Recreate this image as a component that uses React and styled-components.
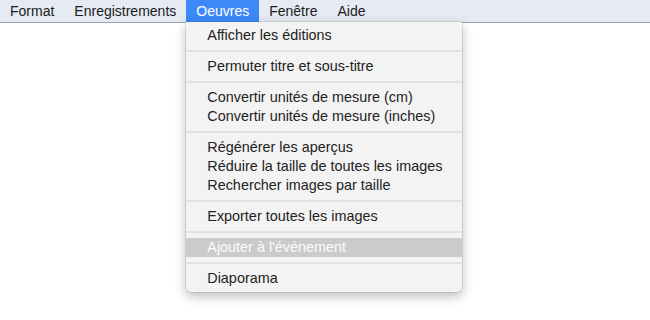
import React from "react";
import styled, { createGlobalStyle } from "styled-components";

const GlobalStyle = createGlobalStyle`
  html, body, #root {
    margin: 0;
    padding: 0;
    height: 100%;
    background: #ffffff;
    font-family: "Liberation Sans", Arial, sans-serif;
  }
`;

const Page = styled.div`
  position: relative;
  min-height: 100vh;
  background: #ffffff;
`;

const MenuBar = styled.nav`
  display: flex;
  height: 22px;
  padding-left: 1px;
  background: #e5eaf3;
  border-bottom: 1px solid #97a3b6;
`;

const MenuTitle = styled.div`
  position: relative;
  padding: 0 10px;
  line-height: 22px;
  font-size: 14px;
  color: ${(p) => (p.$active ? "#ffffff" : "#1c1c1c")};
  background: ${(p) => (p.$active ? "#3d89f7" : "transparent")};
  white-space: nowrap;
  &:first-child {
    padding-left: 9px;
  }
`;

const Dropdown = styled.div`
  position: absolute;
  top: 22px;
  left: 0;
  width: 276px;
  padding: 4px 0;
  background: #f3f3f3;
  border-radius: 0 0 5px 5px;
  box-shadow: 0 0 0 1px rgba(0, 0, 0, 0.07), 0 4px 12px rgba(0, 0, 0, 0.28);
  z-index: 10;
`;

const Item = styled.div`
  height: 19px;
  line-height: 19px;
  padding-left: 21px;
  font-size: 14.4px;
  color: ${(p) => (p.$disabled ? "#fbfcff" : "#222222")};
  background: ${(p) => (p.$highlight ? "#cbcbcb" : "transparent")};
  white-space: nowrap;
`;

const Separator = styled.div`
  height: 2px;
  margin: 5px 0;
  background: #e2e2e2;
`;

const groups = [
  [{ label: "Afficher les éditions" }],
  [{ label: "Permuter titre et sous-titre" }],
  [
    { label: "Convertir unités de mesure (cm)" },
    { label: "Convertir unités de mesure (inches)" },
  ],
  [
    { label: "Régénérer les aperçus" },
    { label: "Réduire la taille de toutes les images" },
    { label: "Rechercher images par taille" },
  ],
  [{ label: "Exporter toutes les images" }],
  [{ label: "Ajouter à l'événement", disabled: true, highlight: true }],
  [{ label: "Diaporama" }],
];

function MenuItems() {
  const out = [];
  groups.forEach((g, gi) => {
    if (gi > 0) out.push(<Separator key={"s" + gi} />);
    g.forEach((it, ii) => {
      out.push(
        <Item key={gi + "-" + ii} $disabled={it.disabled} $highlight={it.highlight}>
          {it.label}
        </Item>
      );
    });
  });
  return out;
}

export default function App() {
  return (
    <Page>
      <GlobalStyle />
      <MenuBar>
        <MenuTitle>Format</MenuTitle>
        <MenuTitle>Enregistrements</MenuTitle>
        <MenuTitle $active>
          Oeuvres
          <Dropdown>
            <MenuItems />
          </Dropdown>
        </MenuTitle>
        <MenuTitle>Fenêtre</MenuTitle>
        <MenuTitle>Aide</MenuTitle>
      </MenuBar>
    </Page>
  );
}
